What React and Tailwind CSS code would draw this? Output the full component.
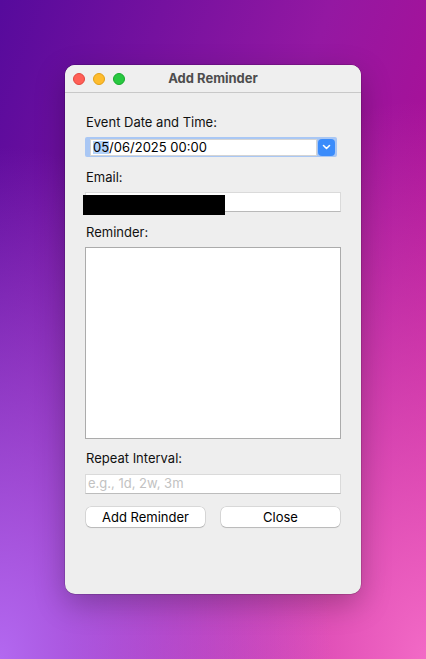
import React from "react";

const App = () => {
    return (
        <div
            className="h-[659px] w-full flex items-center justify-center bg-[radial-gradient(ellipse_at_0%_100%,#b368f0_0%,transparent_55%),radial-gradient(ellipse_at_100%_100%,#f26ac6_0%,transparent_60%),linear-gradient(110deg,#560a9c_0%,#9418a2_50%,#c0088c_100%)]"
            style={{ fontFamily: "Inter, 'Liberation Sans', sans-serif" }}
        >
            {/* Window */}
            <div className="w-[296px] h-[529px] bg-[#eeeeee] rounded-[10px] overflow-hidden shadow-[0_0_0_0.5px_rgba(0,0,0,0.25),0_10px_30px_rgba(0,0,0,0.25)] flex flex-col">
                {/* Title bar */}
                <div className="h-[28px] shrink-0 relative flex items-center bg-[#efefef] border-b border-[#c8c8c8]">
                    <div className="flex items-center gap-[8px] pl-[8px]">
                        <span className="w-[12px] h-[12px] rounded-full bg-[#ff5f57] border-[0.5px] border-[#e2463f]"></span>
                        <span className="w-[12px] h-[12px] rounded-full bg-[#febc2e] border-[0.5px] border-[#e1a116]"></span>
                        <span className="w-[12px] h-[12px] rounded-full bg-[#28c840] border-[0.5px] border-[#17a92c]"></span>
                    </div>
                    <div className="absolute inset-0 flex items-center justify-center text-[13px] font-bold text-[#4d4d4d] pointer-events-none">
                        Add Reminder
                    </div>
                </div>

                {/* Body */}
                <div className="flex flex-col px-[20px] pt-[21px] text-[13px] text-[#111111]">
                    <label className="leading-[16px] pl-[1px]">Event Date and Time:</label>

                    {/* Date field with focus ring */}
                    <div className="mt-[7px] w-[252px] h-[20px] bg-[#a9c7f4] rounded-[2px] flex items-center pl-[5px] pr-[2px] gap-[1px]">
                        <div className="flex-1 h-[17px] bg-white border border-[#d4d4d4] flex items-center pl-[2px] leading-none text-black">
                            <span className="bg-[#b2d2fa]">05</span>
                            <span>/06/2025 00:00</span>
                        </div>
                        <div className="w-[17px] h-[17px] rounded-[4px] bg-[#3b8cfb] flex items-center justify-center">
                            <svg width="9" height="6" viewBox="0 0 9 6">
                                <path d="M1.5 1.5 L4.5 4.5 L7.5 1.5" stroke="white" strokeWidth="1.6" fill="none" strokeLinecap="round" strokeLinejoin="round" />
                            </svg>
                        </div>
                    </div>

                    <label className="mt-[12px] leading-[16px] pl-[1px]">Email:</label>
                    <div className="mt-[7px] relative h-[20px] w-[256px] bg-white border border-[#dadada] border-b-[#b9b9b9]">
                        <div className="absolute left-[-3px] top-[2px] w-[142px] h-[20px] bg-black"></div>
                    </div>

                    <label className="mt-[12px] leading-[16px] pl-[1px]">Reminder:</label>
                    <div className="mt-[7px] h-[192px] w-[256px] bg-white border border-[#ababab]"></div>

                    <label className="mt-[11px] leading-[16px] pl-[1px]">Repeat Interval:</label>
                    <div className="mt-[8px] h-[20px] w-[256px] bg-white border border-[#dadada] border-b-[#bcbcbc] flex items-center pl-[2px] text-[#c2c2c2]">
                        e.g., 1d, 2w, 3m
                    </div>

                    <div className="mt-[13px] flex gap-[16px] pl-[1px]">
                        <button className="w-[119px] h-[20px] bg-white rounded-[5px] shadow-[0_0_0_0.5px_rgba(0,0,0,0.18),0_1px_1px_rgba(0,0,0,0.15)] text-[13px] text-black leading-none">
                            Add Reminder
                        </button>
                        <button className="w-[119px] h-[20px] bg-white rounded-[5px] shadow-[0_0_0_0.5px_rgba(0,0,0,0.18),0_1px_1px_rgba(0,0,0,0.15)] text-[13px] text-black leading-none">
                            Close
                        </button>
                    </div>
                </div>
            </div>
        </div>
    );
};

export default App;
